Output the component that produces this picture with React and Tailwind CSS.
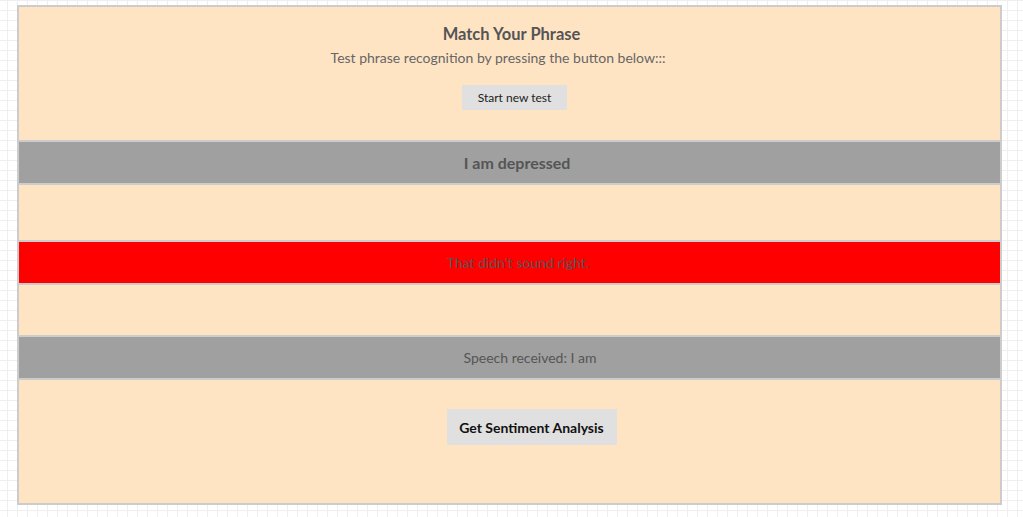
import React from 'react';

const font = { fontFamily: 'Lato, "Noto Sans", sans-serif' };

const Band = ({ children, className = '' }) => (
  <div className={`flex h-[43px] items-center justify-center border-b-2 border-[#cccccc] ${className}`}>
    {children}
  </div>
);

const App = () => {
  return (
    <div
      className="min-h-[517px] w-full bg-white pt-[5px] bg-[linear-gradient(to_right,#efefef_1px,transparent_1px),linear-gradient(to_bottom,#efefef_1px,transparent_1px)] bg-[size:10px_10px] bg-[position:7px_0]"
      style={font}
    >
      <div className="ml-[17px] w-[985px] border-2 border-[#cccccc] bg-[#ffe4c4]">
        <div className="flex h-[135px] flex-col items-center border-b-2 border-[#cccccc] pt-[15px]">
          <h3 className="pl-[4px] text-[16.5px] leading-[24px] font-bold text-[#555555]">Match Your Phrase</h3>
          <p className="pr-[23px] text-[14px] leading-[24px] text-[#666666]">
            Test phrase recognition by pressing the button below:::
          </p>
          <button className="ml-[10px] mt-[15px] h-[25px] w-[105px] bg-[#e0e0e0] text-[12px] text-[#222222]">
            Start new test
          </button>
        </div>

        <Band className="bg-[#a0a0a0]">
          <span className="pl-[15px] text-[16px] font-bold text-[#555555]">I am depressed</span>
        </Band>

        <div className="h-[57px] border-b-2 border-[#cccccc]" />

        <Band className="bg-[#ff0000]">
          <span className="pl-[17px] text-[14px] text-[#555555]">That didn't sound right.</span>
        </Band>

        <div className="h-[52px] border-b-2 border-[#cccccc]" />

        <Band className="bg-[#a0a0a0]">
          <span className="pl-[41px] text-[14px] text-[#555555]">Speech received: I am</span>
        </Band>

        <div className="flex h-[123px] justify-center pt-[29px]">
          <button className="ml-[44px] h-[36px] w-[170px] bg-[#e0e0e0] text-[14px] font-bold text-[#111111]">
            Get Sentiment Analysis
          </button>
        </div>
      </div>
    </div>
  );
};

export default App;
